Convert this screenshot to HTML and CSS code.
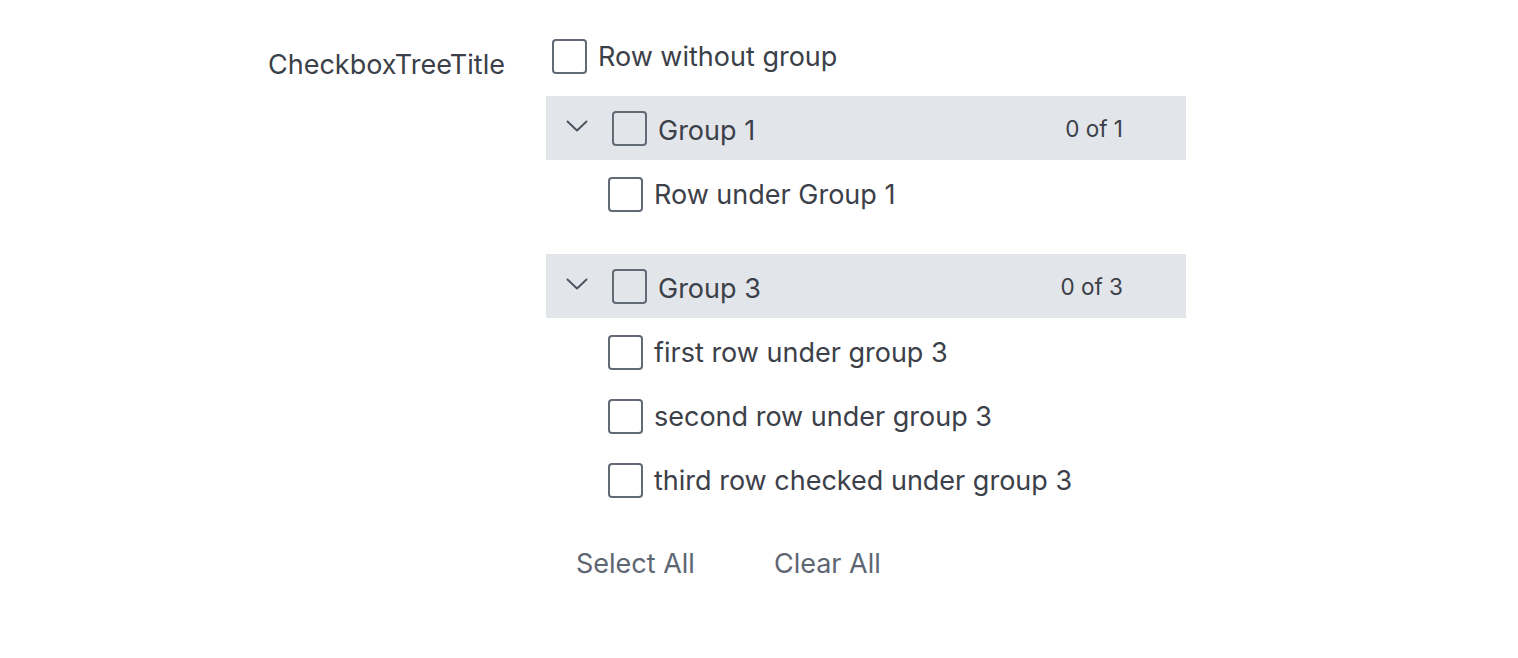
FILE: index.html
```html
<!DOCTYPE html>
<html>
<head>
<meta charset="utf-8">
<link rel="stylesheet" href="styles.css">
</head>
<body>
<div class="page">
  <div class="title">CheckboxTreeTitle</div>
  <div class="tree">
    <label class="row top"><span class="box"></span><span class="label">Row without group</span></label>

    <div class="group first">
      <div class="header">
        <svg class="chev" width="22" height="12" viewBox="0 0 22 12"><path d="M1.5 1.5 L11 10.5 L20.5 1.5" fill="none" stroke="#4b5260" stroke-width="1.9" stroke-linecap="round" stroke-linejoin="round"/></svg>
        <span class="box"></span><span class="label">Group 1</span>
        <span class="count">0 of 1</span>
      </div>
      <div class="children">
        <label class="row"><span class="box"></span><span class="label">Row under Group 1</span></label>
      </div>
    </div>

    <div class="group last">
      <div class="header">
        <svg class="chev" width="22" height="12" viewBox="0 0 22 12"><path d="M1.5 1.5 L11 10.5 L20.5 1.5" fill="none" stroke="#4b5260" stroke-width="1.9" stroke-linecap="round" stroke-linejoin="round"/></svg>
        <span class="box"></span><span class="label">Group 3</span>
        <span class="count">0 of 3</span>
      </div>
      <div class="children">
        <label class="row"><span class="box"></span><span class="label">first row under group 3</span></label>
        <label class="row"><span class="box"></span><span class="label">second row under group 3</span></label>
        <label class="row"><span class="box"></span><span class="label">third row checked under group 3</span></label>
      </div>
    </div>

    <div class="actions">
      <button class="btn">Select All</button>
      <button class="btn">Clear All</button>
    </div>
  </div>
</div>
</body>
</html>
```
FILE: styles.css
```css
html, body {
  margin: 0;
  padding: 0;
  background: #ffffff;
}
body {
  font-family: Inter, "Noto Sans", sans-serif;
  color: #3b4049;
}
.page {
  display: flex;
  padding: 24px 0 0 268px;
}
.title {
  width: 278px;
  flex: none;
  font-size: 27px;
  line-height: 32px;
  margin-top: 25px;
  color: #3b4049;
}
.tree {
  width: 640px;
  display: flex;
  flex-direction: column;
}
.row {
  display: flex;
  align-items: center;
  height: 64px;
  font-size: 27px;
}
.row.top {
  padding-left: 6px;
}
.box {
  width: 31px;
  height: 31px;
  border: 2px solid #626a76;
  border-radius: 4px;
  flex: none;
  box-sizing: content-box;
  background: #fff;
}
.label {
  margin-left: 11px;
}
.group {
  margin-bottom: 28px;
}
.group.first {
  margin-top: 8px;
}
.group.last {
  margin-bottom: 0;
}
.header {
  display: flex;
  align-items: center;
  height: 64px;
  background: #e2e5ea;
  font-size: 27px;
  padding-left: 20px;
  padding-right: 63px;
}
.header .box {
  background: transparent;
  margin-left: 24px;
}
.header .label {
  margin-left: 11px;
  padding-top: 4px;
}
.chev {
  margin-top: -4px;
}
.count {
  margin-left: auto;
  font-size: 22.5px;
}
.children {
  padding-top: 2px;
  padding-left: 62px;
}
.actions {
  display: flex;
  margin-top: 19px;
  height: 64px;
  align-items: center;
  padding-left: 30px;
  gap: 79px;
}
.btn {
  background: none;
  border: none;
  padding: 0;
  font-family: inherit;
  font-size: 27px;
  color: #5e6672;
}
```
